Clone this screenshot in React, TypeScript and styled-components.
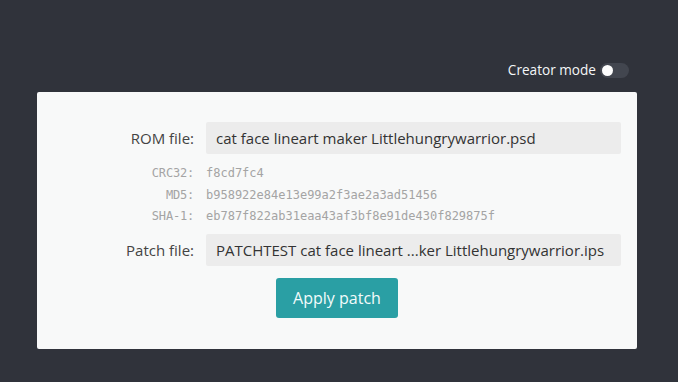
import * as React from 'react';
import styled, { createGlobalStyle } from 'styled-components';

const GlobalStyle = createGlobalStyle`
  html, body {
    margin: 0;
    padding: 0;
    background: #30333b;
    font-family: "Open Sans", "Liberation Sans", sans-serif;
  }
`;

const Page = styled.div`
  width: 600px;
  margin-left: 37px;
  padding-top: 62px;
`;

const TopBar = styled.div`
  display: flex;
  justify-content: flex-end;
  align-items: center;
  gap: 4px;
  height: 16px;
  padding-right: 8px;
  margin-bottom: 14px;
`;

const ModeLabel = styled.span`
  color: #f4f6f8;
  font-size: 13.6px;
  line-height: 16px;
`;

const Toggle = styled.span<{ $on?: boolean }>`
  display: flex;
  align-items: center;
  justify-content: ${(p) => (p.$on ? 'flex-end' : 'flex-start')};
  width: 29px;
  height: 15px;
  padding: 0 2px;
  box-sizing: border-box;
  border-radius: 8px;
  background: #42464f;
`;

const Knob = styled.span`
  width: 11px;
  height: 11px;
  border-radius: 50%;
  background: #fdfdfd;
`;

const Card = styled.div`
  background: #f8f9f9;
  border-radius: 2px;
  padding: 30px 16px 31px 16px;
  display: flex;
  flex-direction: column;
  align-items: center;
`;

const FormGrid = styled.div`
  display: grid;
  grid-template-columns: 141px 1fr;
  column-gap: 12px;
  align-items: center;
  width: 100%;
`;

const Label = styled.div`
  text-align: right;
  font-size: 15px;
  color: #444;
`;

const FileBox = styled.div`
  height: 32px;
  background: #ececec;
  border-radius: 2px;
  padding: 0 10px;
  display: flex;
  align-items: center;
  font-size: 15px;
  color: #333;
  white-space: nowrap;
  overflow: hidden;
`;

const HashKey = styled.div<{ $first?: boolean }>`
  text-align: right;
  font-family: "DejaVu Sans Mono", "Liberation Mono", monospace;
  font-size: 12px;
  line-height: 21.5px;
  color: #a4a4a4;
  margin-top: ${(p) => (p.$first ? 9 : 0)}px;
  letter-spacing: -0.2px;
`;

const HashValue = styled(HashKey)`
  text-align: left;
  letter-spacing: 0;
`;

const Spacer = styled.div`
  height: 6px;
  grid-column: 1 / 3;
`;

const ApplyButton = styled.button`
  margin-top: 12px;
  width: 122px;
  height: 40px;
  border: none;
  border-radius: 3px;
  background: #2a9fa4;
  color: #f2fbfb;
  font-family: "Open Sans", "Liberation Sans", sans-serif;
  font-size: 16px;
  cursor: pointer;
`;

const hashes = [
  { key: 'CRC32:', value: 'f8cd7fc4' },
  { key: 'MD5:', value: 'b958922e84e13e99a2f3ae2a3ad51456' },
  { key: 'SHA-1:', value: 'eb787f822ab31eaa43af3bf8e91de430f829875f' },
];

const App: React.FC = () => (
  <>
    <GlobalStyle />
    <Page>
      <TopBar>
        <ModeLabel>Creator mode</ModeLabel>
        <Toggle>
          <Knob />
        </Toggle>
      </TopBar>
      <Card>
        <FormGrid>
          <Label>ROM file:</Label>
          <FileBox>cat face lineart maker Littlehungrywarrior.psd</FileBox>
          {hashes.map((h, i) => (
            <React.Fragment key={h.key}>
              <HashKey $first={i === 0}>{h.key}</HashKey>
              <HashValue $first={i === 0}>{h.value}</HashValue>
            </React.Fragment>
          ))}
          <Spacer />
          <Label>Patch file:</Label>
          <FileBox>PATCHTEST cat face lineart ...ker Littlehungrywarrior.ips</FileBox>
        </FormGrid>
        <ApplyButton>Apply patch</ApplyButton>
      </Card>
    </Page>
  </>
);

export default App;
